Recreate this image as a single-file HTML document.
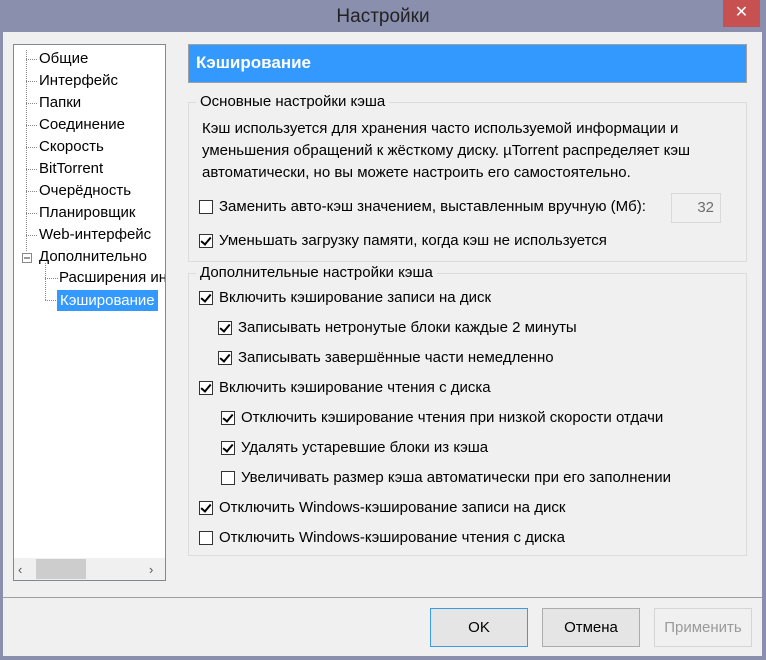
<!DOCTYPE html>
<html><head><meta charset="utf-8"><style>
*{box-sizing:border-box;margin:0;padding:0}
body{width:766px;height:660px;background:#8b8fae;font-family:"Liberation Sans","DejaVu Sans",sans-serif;font-size:15px;color:#000;position:relative;overflow:hidden}
.a{position:absolute}
.title{left:0;top:0;width:766px;height:36px;text-align:center;line-height:34px;font-size:19px;color:#222}
.close{left:723px;top:0;width:37px;height:27px;background:#c75050;color:#fff;text-align:center;line-height:26px;font-size:16px;font-weight:bold}
.client{left:3px;top:32px;width:759px;height:624px;background:#f0f0f0}
.tree{left:13px;top:44px;width:153px;height:537px;background:#fff;border:1px solid #828790;overflow:hidden}
.ti{position:absolute;white-space:nowrap;font-size:15px}
.hdr{left:188px;top:44px;width:559px;height:39px;background:#3399ff;border:1px solid #a0a0a0;color:#fff;font-weight:bold;font-size:17px;line-height:35px;padding-left:7px}
.grp{border:1px solid #dcdcdc}
.lg{position:absolute;background:#f0f0f0;padding:0 4px;font-size:15px}
.cb{position:absolute;width:14px;height:14px;border:1px solid #333;background:#fff}
.cb.c::after{content:"";position:absolute;left:3px;top:0px;width:4px;height:8px;border:solid #000;border-width:0 2.5px 2.5px 0;transform:rotate(40deg)}
.lbl{position:absolute;white-space:nowrap;font-size:15px}
.btn{position:absolute;top:608px;height:39px;width:98px;border:1px solid #acacac;background:#e5e5e5;text-align:center;line-height:37px;font-size:15px}
</style></head><body>
<div class="a title">Настройки</div>
<div class="a close">✕</div>
<div class="a client"></div>

<div class="a tree">
<svg class="a" style="left:0;top:0" width="60" height="270">
<g stroke="#888" stroke-dasharray="1,1" fill="none">
<line x1="12.5" y1="5" x2="12.5" y2="207"/>
<line x1="12" y1="14.5" x2="24" y2="14.5"/><line x1="12" y1="36.5" x2="24" y2="36.5"/>
<line x1="12" y1="58.5" x2="24" y2="58.5"/><line x1="12" y1="80.5" x2="24" y2="80.5"/>
<line x1="12" y1="102.5" x2="24" y2="102.5"/><line x1="12" y1="124.5" x2="24" y2="124.5"/>
<line x1="12" y1="146.5" x2="24" y2="146.5"/><line x1="12" y1="168.5" x2="24" y2="168.5"/>
<line x1="12" y1="190.5" x2="24" y2="190.5"/>
<line x1="31.5" y1="218" x2="31.5" y2="256"/>
<line x1="31" y1="233.5" x2="44" y2="233.5"/><line x1="31" y1="255.5" x2="44" y2="255.5"/>
</g>
<rect x="8.5" y="208.5" width="9" height="9" fill="#fff" stroke="#888"/>
<line x1="10" y1="213" x2="16" y2="213" stroke="#333"/>
</svg>
<div class="ti" style="left:25px;top:5px">Общие</div>
<div class="ti" style="left:25px;top:27px">Интерфейс</div>
<div class="ti" style="left:25px;top:49px">Папки</div>
<div class="ti" style="left:25px;top:71px">Соединение</div>
<div class="ti" style="left:25px;top:93px">Скорость</div>
<div class="ti" style="left:25px;top:115px">BitTorrent</div>
<div class="ti" style="left:25px;top:137px">Очерёдность</div>
<div class="ti" style="left:25px;top:159px">Планировщик</div>
<div class="ti" style="left:25px;top:181px">Web-интерфейс</div>
<div class="ti" style="left:25px;top:203px">Дополнительно</div>
<div class="ti" style="left:45px;top:224px">Расширения интерфейса</div>
<div class="ti" style="left:43px;top:245px;background:#3399ff;color:#fff;padding:1px 2px;border:1px dotted #c08000">Кэширование</div>
<div class="a" style="left:0;bottom:0;width:151px;height:22px;background:#f0f0f0"></div>
<div class="a" style="left:22px;bottom:1px;width:50px;height:20px;background:#cdcdcd"></div>
<div class="a" style="left:4px;bottom:3px;font-size:13px;color:#555">‹</div>
<div class="a" style="left:135px;bottom:3px;font-size:13px;color:#555">›</div>
</div>

<div class="a hdr">Кэширование</div>

<div class="a grp" style="left:188px;top:102px;width:559px;height:160px"></div>
<div class="lg" style="left:196px;top:93px">Основные настройки кэша</div>
<div class="a" style="left:202px;top:118px;width:530px;line-height:22px;font-size:15px">Кэш используется для хранения часто используемой информации и уменьшения обращений к жёсткому диску. µTorrent распределяет кэш автоматически, но вы можете настроить его самостоятельно.</div>
<div class="cb" style="left:199px;top:200px"></div><div class="lbl" style="left:219px;top:198px">Заменить авто-кэш значением, выставленным вручную (Мб):</div>
<div class="a" style="left:671px;top:193px;width:50px;height:30px;border:1px solid #d9d9d9;text-align:right;padding-right:6px;line-height:28px;color:#6d6d6d">32</div>
<div class="cb c" style="left:199px;top:234px"></div><div class="lbl" style="left:219px;top:232px">Уменьшать загрузку памяти, когда кэш не используется</div>

<div class="a grp" style="left:188px;top:273px;width:559px;height:283px"></div>
<div class="lg" style="left:196px;top:264px">Дополнительные настройки кэша</div>
<div class="cb c" style="left:199px;top:291px"></div><div class="lbl" style="left:219px;top:289px">Включить кэширование записи на диск</div>
<div class="cb c" style="left:218px;top:321px"></div><div class="lbl" style="left:238px;top:319px">Записывать нетронутые блоки каждые 2 минуты</div>
<div class="cb c" style="left:218px;top:351px"></div><div class="lbl" style="left:238px;top:349px">Записывать завершённые части немедленно</div>
<div class="cb c" style="left:199px;top:381px"></div><div class="lbl" style="left:219px;top:379px">Включить кэширование чтения с диска</div>
<div class="cb c" style="left:221px;top:411px"></div><div class="lbl" style="left:241px;top:409px">Отключить кэширование чтения при низкой скорости отдачи</div>
<div class="cb c" style="left:221px;top:441px"></div><div class="lbl" style="left:241px;top:439px">Удалять устаревшие блоки из кэша</div>
<div class="cb" style="left:221px;top:471px"></div><div class="lbl" style="left:241px;top:469px">Увеличивать размер кэша автоматически при его заполнении</div>
<div class="cb c" style="left:199px;top:501px"></div><div class="lbl" style="left:219px;top:499px">Отключить Windows-кэширование записи на диск</div>
<div class="cb" style="left:199px;top:531px"></div><div class="lbl" style="left:219px;top:529px">Отключить Windows-кэширование чтения с диска</div>

<div class="a" style="left:3px;top:597px;width:759px;height:1px;background:#a0a0a0"></div>
<div class="btn" style="left:430px;border-color:#3c9be8">OK</div>
<div class="btn" style="left:542px">Отмена</div>
<div class="btn" style="left:654px;color:#9a9a9a;border-color:#d5d5d5;background:#f0f0f0">Применить</div>
</body></html>
